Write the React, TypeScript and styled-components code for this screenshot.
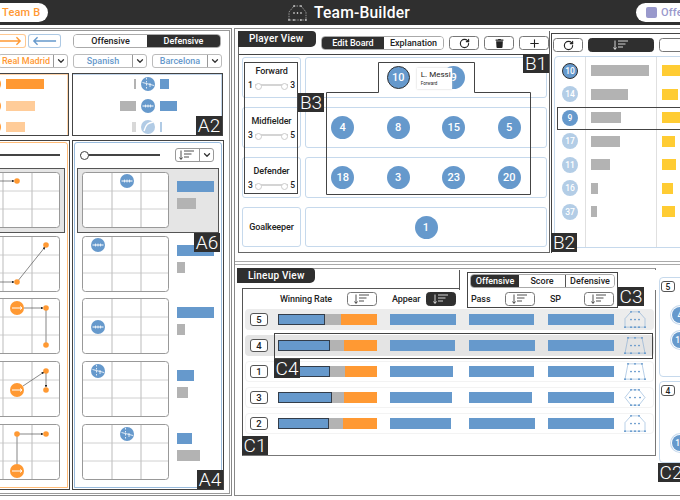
import styled, { createGlobalStyle } from 'styled-components';
import { RotateCw, Plus, ChevronDown } from 'lucide-react';
import { FaTrash } from 'react-icons/fa';

const DARK = '#2f2f2f';
const BLUE = '#6699cc';
const ORANGE = '#ff9933';
const GRAY = '#b3b3b3';
const YELLOW = '#ffcc33';
const PALE = '#c6d9ec';

const GlobalStyle = createGlobalStyle`
    html, body {
        margin: 0;
        background: #fff;
        overflow: hidden;
    }
    * {
        box-sizing: border-box;
    }
`;

const Page = styled.div`
    width: 680px;
    height: 500px;
    overflow: hidden;
    font-family: Roboto, 'Liberation Sans', sans-serif;
    color: #222;
    display: flex;
    flex-direction: column;
`;

const Header = styled.header`
    height: 25px;
    flex: none;
    background: ${DARK};
    display: flex;
    align-items: center;
`;

const TeamPill = styled.div`
    flex: none;
    width: 70px;
    height: 19px;
    margin-left: -22px;
    padding-left: 24px;
    background: #fff;
    border-radius: 0 10px 10px 0;
    color: ${ORANGE};
    font-size: 11px;
    font-weight: 500;
    line-height: 19px;
    letter-spacing: 0.2px;
    white-space: nowrap;
`;

const Title = styled.div`
    flex: none;
    margin-left: 240px;
    display: flex;
    align-items: center;
    gap: 7px;
    color: #fff;
    font-size: 15.6px;
    font-weight: 500;
    letter-spacing: 0.2px;
`;

const ModePill = styled.div`
    flex: none;
    margin-left: auto;
    margin-right: -70px;
    width: 114px;
    height: 19px;
    padding-left: 10px;
    background: #fff;
    border-radius: 10px;
    display: flex;
    align-items: center;
    gap: 4px;
    color: #9999cc;
    font-size: 11px;
    font-weight: 500;
    letter-spacing: 0.2px;
`;

const ModeSwatch = styled.span`
    width: 11px;
    height: 11px;
    background: #9999cc;
    border-radius: 2px;
`;

const Workspace = styled.main`
    flex: 1;
    display: flex;
    align-items: flex-start;
    padding-top: 3px;
`;

/* left half: the two teams */
const LeftFrame = styled.section`
    flex: none;
    width: 322px;
    height: 468px;
    margin-left: -90px;
    border: 1px solid #888;
    padding: 1px;
`;

const LeftInner = styled.div`
    height: 100%;
    border: 1px solid #999;
    padding: 0 5px 4px;
    display: flex;
    gap: 2px;
`;

const TeamColumn = styled.div`
    width: 152px;
    display: flex;
    flex-direction: column;
`;

const ControlRow = styled.div<{ $end?: boolean }>`
    height: 14px;
    margin-top: 3px;
    display: flex;
    justify-content: ${({ $end }) => ($end ? 'flex-end' : 'flex-start')};
    padding: ${({ $end }) => ($end ? '0 9px 0 0' : '0 0 0 1px')};
    gap: 2px;
`;

const ArrowButton = styled.button<{ $color: string }>`
    width: 33px;
    height: 14px;
    padding: 0 3px;
    border: 1px solid ${({ $color }) => $color}88;
    border-radius: 3px;
    background: #fff;
    color: ${({ $color }) => $color};
    display: flex;
    align-items: center;
    justify-content: center;
`;

const Toggle = styled.div<{ $width: number }>`
    width: ${({ $width }) => $width}px;
    height: 14px;
    display: flex;
    border: 1px solid #aaa;
    border-radius: 4px;
    overflow: hidden;
`;

const ToggleItem = styled.div<{ $on?: boolean; $width?: number; $rule?: boolean }>`
    flex: ${({ $width }) => ($width ? `0 0 ${$width}px` : 1)};
    background: ${({ $on }) => ($on ? DARK : '#fff')};
    color: ${({ $on }) => ($on ? '#fff' : '#222')};
    border-right: ${({ $rule }) => ($rule ? '1px solid #555' : 'none')};
    font-size: 9px;
    font-weight: 500;
    line-height: 12px;
    text-align: center;
    white-space: nowrap;
`;

const SelectRow = styled.div<{ $end?: boolean }>`
    height: 14px;
    margin-top: 6px;
    display: flex;
    justify-content: ${({ $end }) => ($end ? 'flex-end' : 'flex-start')};
    padding: ${({ $end }) => ($end ? '0 2px 0 0' : '0 0 0 1px')};
    gap: 5px;
`;

const Select = styled.div<{ $width: number; $color: string }>`
    width: ${({ $width }) => $width}px;
    display: flex;
    border: 1px solid #bbb;
    border-radius: 3px;
    color: ${({ $color }) => $color};
    font-size: 9px;
    font-weight: 500;
    line-height: 12px;
    white-space: nowrap;
`;

const SelectText = styled.span`
    flex: 1;
    text-align: center;
`;

const Chevron = styled.span`
    width: 14px;
    flex: none;
    border-left: 1px solid #999;
    color: #333;
    display: flex;
    align-items: center;
    justify-content: center;
`;

const ComparePanel = styled.div<{ $tone: string }>`
    position: relative;
    height: 63px;
    margin-top: 5px;
    margin-right: 1px;
    border: 1px solid #444;
    box-shadow: inset 0 1px 0 ${({ $tone }) => $tone}66,
        inset -1px 0 0 ${({ $tone }) => $tone}66;
    padding-top: 3px;
    display: flex;
    flex-direction: column;
    gap: 7px;
`;

const CompareRow = styled.div<{ $faded?: boolean }>`
    height: 14.5px;
    display: grid;
    grid-template-columns: 1fr 14px 1fr;
    column-gap: 5px;
    align-items: center;
    opacity: ${({ $faded }) => ($faded ? 0.5 : 1)};
`;

const CompareBar = styled.div<{ $color: string; $end?: boolean }>`
    height: 10px;
    background: ${({ $color }) => $color};
    justify-self: ${({ $end }) => ($end ? 'end' : 'start')};
`;

const TacticPanel = styled.div`
    position: relative;
    flex: 1;
    margin-top: 4px;
    border: 1px solid #444;
    padding: 1px;
`;

const TacticInner = styled.div<{ $tone: string }>`
    height: 100%;
    border: 1px solid ${({ $tone }) => $tone}aa;
    border-radius: 3px 3px 0 0;
    padding: 5px 2px 0;
    display: flex;
    flex-direction: column;
`;

const SliderBar = styled.div<{ $flip?: boolean }>`
    height: 14px;
    display: flex;
    flex-direction: ${({ $flip }) => ($flip ? 'row-reverse' : 'row')};
    align-items: center;
    gap: 15px;
    padding: 0 5px 0 3px;
`;

const Slider = styled.div`
    position: relative;
    width: 82px;
    height: 2px;
    background: #444;
    &::before {
        content: '';
        position: absolute;
        left: 0;
        top: -3px;
        width: 7px;
        height: 7px;
        border-radius: 50%;
        border: 1px solid #444;
        background: #fff;
    }
`;

const SortSplit = styled.div`
    width: 40px;
    height: 14px;
    display: flex;
    border: 1px solid #999;
    border-radius: 3px;
`;

const SortSplitIcon = styled.span`
    flex: 1;
    display: flex;
    align-items: center;
    justify-content: center;
`;

const TacticList = styled.div`
    margin-top: 6px;
    display: flex;
    flex-direction: column;
`;

const TacticRow = styled.div<{ $active?: boolean; $flip?: boolean }>`
    display: flex;
    flex-direction: ${({ $flip }) => ($flip ? 'row-reverse' : 'row')};
    gap: 8px;
    border: ${({ $active }) => ($active ? '1px solid #555' : 'none')};
    background: ${({ $active }) => ($active ? '#e5e5e5' : 'transparent')};
    padding: ${({ $active }) => ($active ? '3.5px 4px' : '0 5px')};
    margin-bottom: ${({ $active }) => ($active ? 3 : 6.75)}px;
`;

const TacticBars = styled.div<{ $flip?: boolean }>`
    padding-top: 9px;
    display: flex;
    flex-direction: column;
    align-items: ${({ $flip }) => ($flip ? 'flex-end' : 'flex-start')};
    gap: 6px;
`;

const TacticBar = styled.div<{ $color: string }>`
    height: 11px;
    background: ${({ $color }) => $color};
`;

const Tag = styled.div`
    position: absolute;
    z-index: 5;
    height: 19px;
    min-width: 26px;
    background: ${DARK};
    color: #fff;
    font-size: 19px;
    font-weight: 300;
    line-height: 19px;
    text-align: center;
`;

/* right half */
const RightFrame = styled.section`
    flex: none;
    position: relative;
    width: 520px;
    height: 468px;
    margin-left: 2px;
    border: 1px solid #888;
    padding: 2px;
`;

const TopRow = styled.div`
    height: 222px;
    display: flex;
    align-items: flex-start;
`;

const PlayerPanel = styled.div`
    width: 313px;
    height: 222px;
    margin-left: 1px;
    border: 1px solid #666;
    border-top: none;
    display: flex;
    flex-direction: column;
`;

const PlayerHead = styled.div`
    height: 23px;
    flex: none;
    display: flex;
    align-items: flex-start;
    gap: 5px;
`;

const ViewTab = styled.div`
    width: 78px;
    height: 16px;
    margin-left: -1px;
    background: ${DARK};
    color: #fff;
    border-radius: 0 4px 5px 0;
    font-size: 10px;
    font-weight: 500;
    line-height: 16px;
    padding-left: 11px;
    letter-spacing: 0.2px;
    flex: none;
`;

const LineupTab = styled(ViewTab)`
    margin: -1px 0 0;
    height: 15px;
    line-height: 15px;
`;

const IconButton = styled.button<{ $on?: boolean; $width?: number }>`
    width: ${({ $width }) => $width ?? 30}px;
    height: 14px;
    padding: 0;
    flex: none;
    border: 1px solid ${({ $on }) => ($on ? DARK : '#777')};
    border-radius: 3.5px;
    background: ${({ $on }) => ($on ? DARK : '#fff')};
    color: ${({ $on }) => ($on ? '#fff' : '#222')};
    display: flex;
    align-items: center;
    justify-content: center;
`;

const HeadControls = styled.div`
    margin-top: 5px;
    display: flex;
    gap: 5px;
`;

const PlayerBody = styled.div`
    position: relative;
    flex: 1;
    border-top: 1px solid #444;
    padding: 2px 0 0 3px;
    display: grid;
    grid-template-columns: 59px 242px;
    grid-template-rows: 41px 41px 41px 40px;
    column-gap: 4px;
    row-gap: 9px;
    align-content: start;
`;

const RoleCell = styled.div`
    border: 1px solid ${PALE};
    border-radius: 3px;
    display: flex;
    flex-direction: column;
    align-items: center;
    justify-content: center;
    gap: 5px;
    padding: 0 5px;
`;

const RoleName = styled.div`
    font-size: 9px;
    font-weight: 500;
    line-height: 10px;
    letter-spacing: -0.1px;
`;

const RoleRange = styled.div`
    width: 100%;
    display: flex;
    align-items: center;
    gap: 2px;
    font-size: 8.5px;
    font-weight: 500;
    line-height: 9px;
`;

const RoleTrack = styled.span`
    position: relative;
    flex: 1;
    height: 2px;
    background: #d4d4d4;
    &::before,
    &::after {
        content: '';
        position: absolute;
        top: -1.5px;
        width: 5px;
        height: 5px;
        border-radius: 50%;
        border: 1px solid #ccc;
        background: #fff;
    }
    &::before {
        left: 0;
    }
    &::after {
        right: 0;
    }
`;

const BoardCell = styled.div`
    border: 1px solid ${PALE};
    border-radius: 3px;
    display: flex;
    align-items: center;
    justify-content: center;
    gap: 32.5px;
`;

const Player = styled.div<{ $selected?: boolean }>`
    position: relative;
    width: 23px;
    height: 23px;
    border-radius: 50%;
    background: ${BLUE};
    border: ${({ $selected }) => ($selected ? `1px solid ${DARK}` : 'none')};
    color: #fff;
    font-size: 11px;
    font-weight: 500;
    display: flex;
    align-items: center;
    justify-content: center;
`;

const PlayerTip = styled.div`
    position: absolute;
    z-index: 3;
    left: 29px;
    top: 1px;
    width: 35px;
    height: 21px;
    background: #fff;
    box-shadow: 0 0 2px #ccc;
    color: #222;
    padding: 2px 0 0 4px;
    font-size: 8px;
    line-height: 10px;
    font-weight: 400;
    white-space: nowrap;
`;

const PlayerTipRole = styled.div`
    font-size: 4.5px;
    line-height: 6px;
    margin-top: 1px;
`;

const RoleFrame = styled.div`
    position: absolute;
    left: 5px;
    top: 7px;
    width: 54px;
    height: 132px;
    border: 1px solid #444;
    pointer-events: none;
`;

const FormationFrame = styled.svg`
    position: absolute;
    left: 87px;
    top: 7px;
    width: 205px;
    height: 133px;
    pointer-events: none;
`;

const RankPanel = styled.div`
    width: 300px;
    height: 220px;
    margin-top: 2px;
    margin-left: 1px;
    border-top: 1px solid #444;
    border-left: 1px solid #444;
    position: relative;
    padding: 4px 0 0 1px;
`;

const RankTools = styled.div`
    display: flex;
    gap: 5px;
    margin-bottom: 4px;
`;

const RankTable = styled.div`
    margin-left: 1px;
    height: 192px;
    border: 1px solid ${PALE};
    border-radius: 4px 0 0 4px;
    padding-top: 2px;
    background: linear-gradient(#e0e0e0, #e0e0e0) 30px 0 / 1px 100% no-repeat,
        linear-gradient(#e0e0e0, #e0e0e0) 101px 0 / 1px 100% no-repeat;
`;

const RankRow = styled.div<{ $active?: boolean }>`
    position: relative;
    height: 23.5px;
    display: grid;
    grid-template-columns: 31px 71px 1fr;
    align-items: center;
    ${({ $active }) =>
        $active &&
        `&::after {
            content: '';
            position: absolute;
            left: 2px;
            right: 0;
            top: 1px;
            bottom: 0;
            border: 1px solid #444;
        }`}
`;

const RankToken = styled.div<{ $faded?: boolean; $selected?: boolean }>`
    width: 16px;
    height: 16px;
    margin-left: 7px;
    border-radius: 50%;
    background: ${({ $faded }) => ($faded ? '#b3cde6' : BLUE)};
    border: ${({ $selected }) => ($selected ? `1px solid ${DARK}` : 'none')};
    color: #fff;
    font-size: 8.5px;
    font-weight: 500;
    display: flex;
    align-items: center;
    justify-content: center;
`;

const RankBar = styled.div<{ $color: string; $gap: number }>`
    height: 11px;
    margin-left: ${({ $gap }) => $gap}px;
    background: ${({ $color }) => $color};
`;

const Divider = styled.div`
    height: 4px;
    margin: 8px -2px 0;
    border-top: 1px solid #aaa;
    border-bottom: 1px solid #aaa;
`;

const LineupRow = styled.div`
    display: flex;
    align-items: flex-start;
    margin-top: 3px;
`;

const LineupMain = styled.div`
    position: relative;
    flex: none;
    width: 419px;
    height: 188px;
    border-top: 1px solid #999;
    border-right: 1px solid #777;
`;

const LineupTable = styled.div`
    position: relative;
    margin: 5px 0 0 5px;
    height: 168px;
    border-left: 1px solid #555;
    border-top: 1px solid #555;
    border-bottom: 1px solid #777;
    padding: 0 1px 0 2px;
`;

const LineupStub = styled.div`
    position: absolute;
    left: 216px;
    top: -19px;
    width: 197px;
    height: 20px;
    border-left: 1px solid #555;
    background: #fff;
`;

const C3Frame = styled.div`
    position: absolute;
    z-index: 2;
    left: 230px;
    top: 3px;
    width: 151px;
    height: 36px;
    border: 1px solid #444;
    padding: 1px 0 0 2px;
    pointer-events: none;
`;

const LineupColumns = styled.div`
    display: grid;
    grid-template-columns: 28px 112px 79px 79px 76px 22px;
    align-items: center;
    padding-left: 5px;
`;

const HeadRow = styled(LineupColumns)`
    height: 20px;
    position: relative;
    z-index: 3;
`;

const HeadCell = styled.div<{ $width: number }>`
    width: ${({ $width }) => $width}px;
    display: flex;
    align-items: center;
    justify-content: space-between;
    padding-left: 2px;
    font-size: 9px;
    font-weight: 500;
    letter-spacing: -0.1px;
`;

const LineRow = styled(LineupColumns)<{ $shade?: string; $active?: boolean }>`
    position: relative;
    height: 21px;
    margin-bottom: 5px;
    border-radius: 4px;
    background: ${({ $shade }) => $shade ?? '#fff'};
    border: ${({ $shade }) => ($shade ? 'none' : '1px solid #f3f3f3')};
    padding-left: ${({ $shade }) => ($shade ? 5 : 4)}px;
    ${({ $active }) =>
        $active &&
        `&::after {
            content: '';
            position: absolute;
            z-index: 2;
            left: 29px;
            right: 1px;
            top: -2px;
            bottom: -3px;
            border: 1px solid #444;
        }`}
`;

const RankBadge = styled.div<{ $small?: boolean }>`
    width: ${({ $small }) => ($small ? 14 : 18)}px;
    height: ${({ $small }) => ($small ? 11 : 13)}px;
    border: 1px solid #555;
    border-radius: 3px;
    background: #fff;
    font-size: ${({ $small }) => ($small ? 8.5 : 9.5)}px;
    font-weight: 500;
    display: flex;
    align-items: center;
    justify-content: center;
`;

const SegmentBar = styled.div`
    width: 99px;
    height: 11px;
    display: flex;
`;

const Segment = styled.div<{ $color: string; $outlined?: boolean }>`
    background: ${({ $color }) => $color};
    border: ${({ $outlined }) => ($outlined ? '1px solid #333d4a' : 'none')};
`;

const PlainBar = styled.div`
    height: 11px;
    background: ${BLUE};
`;

const C2Column = styled.div`
    position: relative;
    flex: none;
    width: 90px;
    margin-top: 9px;
    padding-left: 3px;
    display: flex;
    flex-direction: column;
    gap: 4px;
`;

const C2Card = styled.div<{ $height: number }>`
    height: ${({ $height }) => $height}px;
    border: 1px solid ${PALE};
    border-radius: 4px 0 0 4px;
    padding: 3px 0 0 1px;
`;

const C2Tokens = styled.div<{ $top: number }>`
    margin: ${({ $top }) => $top}px 0 0 11px;
    display: flex;
    flex-direction: column;
    gap: 9px;
`;

const C2Token = styled.div`
    width: 16px;
    height: 16px;
    border-radius: 50%;
    background: ${BLUE};
    box-shadow: 0 0 0 1px #fff, 0 0 0 2px ${PALE};
    color: #fff;
    font-size: 8.5px;
    font-weight: 500;
    display: flex;
    align-items: center;
    justify-content: center;
`;

const SortIcon = ({ color = '#222' }: { color?: string }) => (
    <svg width="16" height="10" viewBox="0 0 16 10">
        <path
            d="M2 0.5V9M0.5 7.5L2 9.5L3.5 7.5M5 1H15M5 4H12.5M5 7H10"
            fill="none"
            stroke={color}
            strokeWidth="0.8"
        />
    </svg>
);

const LongArrow = ({ flip }: { flip?: boolean }) => (
    <svg width="27" height="10" viewBox="0 0 27 10">
        <path
            d={flip ? 'M26 5H2M6 1L2 5L6 9' : 'M1 5H25M21 1L25 5L21 9'}
            fill="none"
            stroke="currentColor"
            strokeWidth="1.5"
        />
    </svg>
);

const LogoIcon = () => (
    <svg width="19" height="16" viewBox="0 0 19 16">
        <path
            d="M6 1H13L18 7V15H1V7Z"
            fill="none"
            stroke="#fff"
            strokeWidth="0.5"
            strokeDasharray="1.5 1"
        />
        {[
            [6, 1],
            [13, 1],
            [6, 8],
            [9.5, 8],
            [13, 8],
            [1, 15],
            [6, 15],
            [13, 15],
            [18, 15]
        ].map(([cx, cy]) => (
            <circle key={`${cx}-${cy}`} cx={cx} cy={cy} r="0.8" fill="#fff" />
        ))}
    </svg>
);

const FORMATIONS: Record<string, { outline: string; dots: number[][] }> = {
    house: {
        outline: 'M7 1H15L21 9V19H1V9Z',
        dots: [[7, 1], [15, 1], [7, 10], [11, 10], [15, 10], [1, 19], [7, 19], [11, 19], [15, 19], [21, 19]]
    },
    trapezoid: {
        outline: 'M4 1H18L21 19H1Z',
        dots: [[4, 1], [11, 1], [18, 1], [7, 10], [11, 10], [15, 10], [1, 19], [7, 19], [15, 19], [21, 19]]
    },
    hexagon: {
        outline: 'M7 1H15L21 10L15 19H7L1 10Z',
        dots: [[7, 1], [11, 1], [15, 1], [6, 10], [11, 10], [16, 10], [7, 19], [11, 19], [15, 19]]
    }
};

const Formation = ({ kind }: { kind: string }) => (
    <svg width="22" height="17" viewBox="0 0 22 20" preserveAspectRatio="none">
        <path d={FORMATIONS[kind].outline} fill="none" stroke={BLUE} strokeWidth="0.5" />
        {FORMATIONS[kind].dots.map(([cx, cy]) => (
            <circle key={`${cx}-${cy}`} cx={cx} cy={cy} r="1" fill={BLUE} />
        ))}
    </svg>
);

type TokenKind = 'pass' | 'cross' | 'curve';

const TokenMarks = ({ kind, r }: { kind: TokenKind; r: number }) => {
    if (kind === 'pass') {
        return (
            <g stroke="#fff" strokeWidth="1" fill="#fff">
                <path d={`M${-r + 1.5} 0H${r - 1.5}`} />
                <path d="M-2.5 -1.5V1.5M0 -1.5V1.5M2.5 -1.5V1.5" strokeWidth="0.7" />
            </g>
        );
    }
    if (kind === 'cross') {
        return (
            <g stroke="#fff" strokeWidth="0.8" fill="none">
                <path d={`M${-r + 1.5} ${-1.5}L${r - 1} ${1.5}`} />
                <path d={`M${-1.5} ${-r + 1}V${r - 1}`} strokeDasharray="1.5 1.5" />
                <path d={`M${2} ${-1}V3`} />
            </g>
        );
    }
    return (
        <g stroke="#fff" strokeWidth="1.4" fill="none">
            <path d={`M${-r + 3} ${r - 3}C-2 -3 0 -4 ${r - 2} ${-r + 2}`} />
        </g>
    );
};

const Token = ({ cx, cy, r, kind, color = BLUE }: { cx: number; cy: number; r: number; kind: TokenKind; color?: string }) => (
    <g transform={`translate(${cx} ${cy})`}>
        <circle r={r} fill={color} />
        <TokenMarks kind={kind} r={r} />
    </g>
);

const Big = ({ cx, cy }: { cx: number; cy: number }) => (
    <g transform={`translate(${cx} ${cy})`}>
        <circle r="7" fill={ORANGE} />
        <path d="M-5 0H4.5M3 -1.5L5 0L3 1.5" stroke="#fff" strokeWidth="1" fill="none" />
    </g>
);

const Dot = ({ cx, cy }: { cx: number; cy: number }) => <circle cx={cx} cy={cy} r="2.8" fill={ORANGE} />;

const Link = ({ d, thick }: { d: string; thick?: boolean }) => (
    <path d={d} fill="none" stroke={thick ? '#999' : '#555'} strokeWidth={thick ? 1.2 : 0.7} markerEnd={thick ? undefined : 'url(#tip)'} />
);

const TacticChart = ({ children }: { children?: React.ReactNode }) => (
    <svg width="87" height="56" viewBox="0 0 87 56" style={{ flex: 'none', display: 'block' }}>
        <defs>
            <marker id="tip" markerWidth="4" markerHeight="4" refX="3.4" refY="2" orient="auto">
                <path d="M0 0L4 2L0 4Z" fill="#222" />
            </marker>
        </defs>
        <rect x="0.5" y="0.5" width="86" height="55" rx="3" fill="#fff" stroke="#999" />
        <path d="M30 1V55M59 1V55" stroke="#aaa" strokeWidth="0.8" />
        <path d="M1 19H86M1 37H86" stroke="#c4c4c4" strokeWidth="0.8" />
        {children}
    </svg>
);

const Sides = [
    { blue: 37, gray: 19, chart: <Token cx={45} cy={9} r={7} kind="pass" />, active: true },
    { blue: 37, gray: 8, chart: <Token cx={16} cy={9} r={7} kind="pass" /> },
    { blue: 37, gray: 8, chart: <Token cx={16} cy={29} r={7} kind="pass" /> },
    { blue: 17, gray: 11, chart: <Token cx={16} cy={10} r={7} kind="cross" /> },
    { blue: 15, gray: 23, chart: <Token cx={45} cy={10} r={7} kind="cross" /> }
];

const HomeCharts = [
    <>
        <Link d="M20 9H41" />
        <Dot cx={44} cy={9} />
    </>,
    <>
        <Link d="M20 46H41" />
        <Link d="M44 46L72 11" />
        <Dot cx={44} cy={46} />
        <Dot cx={73} cy={9} />
    </>,
    <>
        <Link d="M51 10H70" />
        <Link d="M73 12V45" thick />
        <Big cx={44} cy={10} />
        <Dot cx={73} cy={10} />
        <Dot cx={73} cy={47} />
    </>,
    <>
        <Link d="M50 25L71 11" />
        <Link d="M73 12V26" />
        <Big cx={44} cy={29} />
        <Dot cx={73} cy={10} />
        <Dot cx={73} cy={29} />
    </>,
    <>
        <Link d="M44 40V12" thick />
        <Link d="M46 10H70" />
        <Big cx={44} cy={47} />
        <Dot cx={44} cy={10} />
        <Dot cx={73} cy={10} />
    </>
];

const HOME_BARS = [
    [80, 40],
    [60, 30],
    [60, 30],
    [60, 30],
    [60, 30]
];

const RANKS = [
    { n: 10, gray: 58, yellow: 22, selected: true },
    { n: 14, gray: 37, yellow: 16, faded: true },
    { n: 9, gray: 30, yellow: 22, active: true },
    { n: 17, gray: 29, yellow: 13, faded: true },
    { n: 11, gray: 19, yellow: 14, faded: true },
    { n: 16, gray: 7, yellow: 11, faded: true },
    { n: 37, gray: 6, yellow: 13, faded: true }
];

const LINEUPS = [
    { n: 5, blue: 47, mid: 16, appear: 66, pass: 65, sp: 66, kind: 'house', shade: '#ececec' },
    { n: 4, blue: 51.5, mid: 14.5, appear: 65, pass: 66, sp: 66, kind: 'trapezoid', shade: '#e4e4e4', active: true },
    { n: 1, blue: 52, mid: 15, appear: 63, pass: 65, sp: 66, kind: 'trapezoid' },
    { n: 3, blue: 54, mid: 12, appear: 62, pass: 63, sp: 66, kind: 'hexagon' },
    { n: 2, blue: 51, mid: 14, appear: 61, pass: 66, sp: 66, kind: 'house' }
];

function SmallToken({ color, kind }: { color: string; kind: TokenKind }) {
    return (
        <svg width="14" height="14" viewBox="-7 -7 14 14">
            <Token cx={0} cy={0} r={7} kind={kind} color={color} />
        </svg>
    );
}

const App = () => (
    <Page>
        <GlobalStyle />
        <Header>
            <TeamPill>Team B</TeamPill>
            <Title>
                <LogoIcon />
                Team-Builder
            </Title>
            <ModePill>
                <ModeSwatch />
                Offensive
            </ModePill>
        </Header>
        <Workspace>
            <LeftFrame>
                <LeftInner>
                    <TeamColumn>
                        <ControlRow $end>
                            <ArrowButton $color={ORANGE}>
                                <LongArrow />
                            </ArrowButton>
                            <ArrowButton $color={BLUE}>
                                <LongArrow flip />
                            </ArrowButton>
                        </ControlRow>
                        <SelectRow $end>
                            <Select $width={70} $color={ORANGE}>
                                <SelectText>Real Madrid</SelectText>
                                <Chevron>
                                    <ChevronDown size={10} strokeWidth={3} />
                                </Chevron>
                            </Select>
                        </SelectRow>
                        <ComparePanel $tone={ORANGE}>
                            <CompareRow>
                                <span />
                                <SmallToken color={ORANGE} kind="cross" />
                                <CompareBar $color={ORANGE} style={{ width: 38 }} />
                            </CompareRow>
                            <CompareRow>
                                <span />
                                <SmallToken color={ORANGE} kind="pass" />
                                <CompareBar $color="#ffcc99" style={{ width: 29 }} />
                            </CompareRow>
                            <CompareRow>
                                <span />
                                <SmallToken color={ORANGE} kind="curve" />
                                <CompareBar $color="#ffcc99" style={{ width: 19 }} />
                            </CompareRow>
                        </ComparePanel>
                        <TacticPanel>
                            <TacticInner $tone={ORANGE}>
                                <SliderBar $flip>
                                    <Slider />
                                </SliderBar>
                                <TacticList>
                                    {HomeCharts.map((chart, i) => (
                                        <TacticRow key={i} $active={i === 0} $flip>
                                            <TacticChart>{chart}</TacticChart>
                                            <TacticBars $flip>
                                                <TacticBar $color={ORANGE} style={{ width: HOME_BARS[i][0] }} />
                                                <TacticBar $color={GRAY} style={{ width: HOME_BARS[i][1] }} />
                                            </TacticBars>
                                        </TacticRow>
                                    ))}
                                </TacticList>
                            </TacticInner>
                        </TacticPanel>
                    </TeamColumn>
                    <TeamColumn>
                        <ControlRow>
                            <Toggle $width={148}>
                                <ToggleItem>Offensive</ToggleItem>
                                <ToggleItem $on>Defensive</ToggleItem>
                            </Toggle>
                        </ControlRow>
                        <SelectRow>
                            <Select $width={74} $color={BLUE}>
                                <SelectText>Spanish</SelectText>
                                <Chevron>
                                    <ChevronDown size={10} strokeWidth={3} />
                                </Chevron>
                            </Select>
                            <Select $width={70} $color={BLUE}>
                                <SelectText>Barcelona</SelectText>
                                <Chevron>
                                    <ChevronDown size={10} strokeWidth={3} />
                                </Chevron>
                            </Select>
                        </SelectRow>
                        <ComparePanel $tone={BLUE}>
                            <CompareRow>
                                <CompareBar $color={GRAY} $end style={{ width: 2 }} />
                                <SmallToken color={BLUE} kind="cross" />
                                <CompareBar $color={BLUE} style={{ width: 9 }} />
                            </CompareRow>
                            <CompareRow>
                                <CompareBar $color={GRAY} $end style={{ width: 16 }} />
                                <SmallToken color={BLUE} kind="pass" />
                                <CompareBar $color={BLUE} style={{ width: 17 }} />
                            </CompareRow>
                            <CompareRow $faded>
                                <CompareBar $color={GRAY} $end style={{ width: 4 }} />
                                <SmallToken color={BLUE} kind="curve" />
                                <CompareBar $color={BLUE} style={{ width: 2 }} />
                            </CompareRow>
                            <Tag style={{ right: 0, bottom: 0 }}>A2</Tag>
                        </ComparePanel>
                        <TacticPanel>
                            <TacticInner $tone={BLUE}>
                                <SliderBar>
                                    <Slider />
                                    <SortSplit>
                                        <SortSplitIcon>
                                            <SortIcon />
                                        </SortSplitIcon>
                                        <Chevron>
                                            <ChevronDown size={10} strokeWidth={3} />
                                        </Chevron>
                                    </SortSplit>
                                </SliderBar>
                                <TacticList>
                                    {Sides.map((side, i) => (
                                        <TacticRow key={i} $active={side.active}>
                                            <TacticChart>{side.chart}</TacticChart>
                                            <TacticBars>
                                                <TacticBar $color={BLUE} style={{ width: side.blue }} />
                                                <TacticBar $color={GRAY} style={{ width: side.gray }} />
                                            </TacticBars>
                                        </TacticRow>
                                    ))}
                                </TacticList>
                            </TacticInner>
                            <Tag style={{ right: 3, top: 92 }}>A6</Tag>
                            <Tag style={{ right: 0, bottom: 0 }}>A4</Tag>
                        </TacticPanel>
                    </TeamColumn>
                </LeftInner>
            </LeftFrame>
            <RightFrame>
                <TopRow>
                    <PlayerPanel>
                        <PlayerHead>
                            <ViewTab>Player View</ViewTab>
                            <HeadControls>
                                <Toggle $width={123}>
                                    <ToggleItem $on $width={62}>Edit Board</ToggleItem>
                                    <ToggleItem>Explanation</ToggleItem>
                                </Toggle>
                                <IconButton>
                                    <RotateCw size={11} strokeWidth={2.5} />
                                </IconButton>
                                <IconButton>
                                    <FaTrash size={9} />
                                </IconButton>
                                <IconButton>
                                    <Plus size={13} strokeWidth={2} />
                                </IconButton>
                            </HeadControls>
                        </PlayerHead>
                        <PlayerBody>
                            <RoleCell>
                                <RoleName>Forward</RoleName>
                                <RoleRange>1<RoleTrack />3</RoleRange>
                            </RoleCell>
                            <BoardCell>
                                <Player $selected>
                                    10
                                    <PlayerTip>
                                        L. Messi
                                        <PlayerTipRole>Forward</PlayerTipRole>
                                    </PlayerTip>
                                </Player>
                                <Player>9</Player>
                            </BoardCell>
                            <RoleCell>
                                <RoleName>Midfielder</RoleName>
                                <RoleRange>3<RoleTrack />5</RoleRange>
                            </RoleCell>
                            <BoardCell>
                                {[4, 8, 15, 5].map(n => (
                                    <Player key={n}>{n}</Player>
                                ))}
                            </BoardCell>
                            <RoleCell>
                                <RoleName>Defender</RoleName>
                                <RoleRange>3<RoleTrack />5</RoleRange>
                            </RoleCell>
                            <BoardCell>
                                {[18, 3, 23, 20].map(n => (
                                    <Player key={n}>{n}</Player>
                                ))}
                            </BoardCell>
                            <RoleCell>
                                <RoleName>Goalkeeper</RoleName>
                            </RoleCell>
                            <BoardCell>
                                <Player>1</Player>
                            </BoardCell>
                            <RoleFrame />
                            <FormationFrame viewBox="0 0 205 133">
                                <path d="M0.5 30.5H52.5V0.5H148.5V30.5H204.5V132.5H0.5Z" fill="none" stroke="#444" />
                            </FormationFrame>
                            <Tag style={{ left: 59, top: 38 }}>B3</Tag>
                            <Tag style={{ right: 0, top: -1 }}>B1</Tag>
                        </PlayerBody>
                    </PlayerPanel>
                    <RankPanel>
                        <RankTools>
                            <IconButton>
                                <RotateCw size={11} strokeWidth={2.5} />
                            </IconButton>
                            <IconButton $on $width={66}>
                                <SortIcon color="#fff" />
                            </IconButton>
                            <IconButton $width={60}>
                                <SortIcon />
                            </IconButton>
                        </RankTools>
                        <RankTable>
                            {RANKS.map(r => (
                                <RankRow key={r.n} $active={r.active}>
                                    <RankToken $faded={r.faded} $selected={r.selected}>
                                        {r.n}
                                    </RankToken>
                                    <RankBar $color={GRAY} $gap={5} style={{ width: r.gray }} />
                                    <RankBar $color={YELLOW} $gap={5} style={{ width: r.yellow }} />
                                </RankRow>
                            ))}
                        </RankTable>
                        <Tag style={{ left: -1, top: 199 }}>B2</Tag>
                    </RankPanel>
                </TopRow>
                <Divider />
                <LineupRow>
                    <LineupMain>
                        <LineupTab>Lineup View</LineupTab>
                        <LineupTable>
                            <LineupStub />
                            <HeadRow>
                                <span />
                                <HeadCell $width={99}>
                                    Winning Rate
                                    <IconButton>
                                        <SortIcon />
                                    </IconButton>
                                </HeadCell>
                                <HeadCell $width={66}>
                                    Appear
                                    <IconButton $on>
                                        <SortIcon color="#fff" />
                                    </IconButton>
                                </HeadCell>
                                <HeadCell $width={66}>
                                    Pass
                                    <IconButton>
                                        <SortIcon />
                                    </IconButton>
                                </HeadCell>
                                <HeadCell $width={66}>
                                    SP
                                    <IconButton>
                                        <SortIcon />
                                    </IconButton>
                                </HeadCell>
                            </HeadRow>
                            {LINEUPS.map(row => (
                                <LineRow key={row.n} $shade={row.shade} $active={row.active}>
                                    <RankBadge>{row.n}</RankBadge>
                                    <SegmentBar>
                                        <Segment $color={BLUE} $outlined style={{ width: row.blue }} />
                                        <Segment $color={GRAY} style={{ width: row.mid }} />
                                        <Segment $color={ORANGE} style={{ flex: 1 }} />
                                    </SegmentBar>
                                    <PlainBar style={{ width: row.appear }} />
                                    <PlainBar style={{ width: row.pass }} />
                                    <PlainBar style={{ width: row.sp }} />
                                    <Formation kind={row.kind} />
                                </LineRow>
                            ))}
                            <Tag style={{ left: 31, top: 70 }}>C4</Tag>
                            <Tag style={{ left: -1, bottom: 0 }}>C1</Tag>
                        </LineupTable>
                        <C3Frame>
                            <Toggle $width={145}>
                                <ToggleItem $on $width={48}>Offensive</ToggleItem>
                                <ToggleItem $width={47} $rule>Score</ToggleItem>
                                <ToggleItem>Defensive</ToggleItem>
                            </Toggle>
                        </C3Frame>
                        <Tag style={{ left: 381, top: 18, zIndex: 6 }}>C3</Tag>
                    </LineupMain>
                    <C2Column>
                        <C2Card $height={100}>
                            <RankBadge $small>5</RankBadge>
                            <C2Tokens $top={15}>
                                <C2Token>4</C2Token>
                                <C2Token>18</C2Token>
                            </C2Tokens>
                        </C2Card>
                        <C2Card $height={82}>
                            <RankBadge $small>4</RankBadge>
                            <C2Tokens $top={39}>
                                <C2Token>18</C2Token>
                            </C2Tokens>
                        </C2Card>
                        <Tag style={{ left: 2, top: 186 }}>C2</Tag>
                    </C2Column>
                </LineupRow>
            </RightFrame>
        </Workspace>
    </Page>
);

export default App;
